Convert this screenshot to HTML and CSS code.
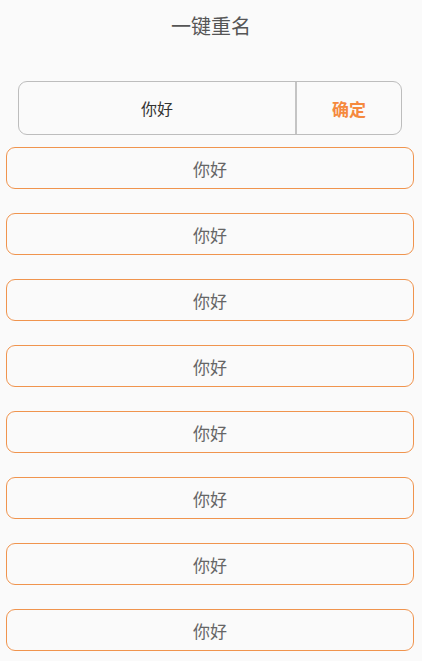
FILE: index.html
```html
<!DOCTYPE html>
<html lang="zh">
<head>
<meta charset="utf-8">
<title>一键重名</title>
<link rel="stylesheet" href="styles.css">
</head>
<body>
<div class="page">
  <header class="title">一键重名</header>
  <div class="rename">
    <div class="rename-input">你好</div>
    <div class="rename-ok">确定</div>
  </div>
  <ul class="list">
    <li class="item">你好</li>
    <li class="item">你好</li>
    <li class="item">你好</li>
    <li class="item">你好</li>
    <li class="item">你好</li>
    <li class="item">你好</li>
    <li class="item">你好</li>
    <li class="item">你好</li>
  </ul>
</div>
</body>
</html>
```
FILE: styles.css
```css
html, body {
  margin: 0;
  padding: 0;
  background: #fafafa;
}
body {
  font-family: Roboto, "Noto Sans CJK SC", sans-serif;
}
.page {
  display: flex;
  flex-direction: column;
  padding: 0 8px 0 6px;
}
.title {
  height: 50px;
  display: flex;
  align-items: center;
  justify-content: center;
  font-size: 20px;
  color: #555;
  padding-left: 2px;
}
.rename {
  margin: 31px 12px 12px 12px;
  height: 52px;
  border: 1px solid #bdbdbd;
  border-radius: 9px;
  display: flex;
}
.rename-input {
  width: 276px;
  border-right: 2px solid #c4c4c4;
  display: flex;
  align-items: center;
  justify-content: center;
  font-size: 16px;
  color: #333;
}
.rename-ok {
  flex: 1;
  display: flex;
  align-items: center;
  justify-content: center;
  font-size: 17px;
  font-weight: bold;
  color: #f5893e;
}
.list {
  list-style: none;
  margin: 0;
  padding: 0;
  display: flex;
  flex-direction: column;
  gap: 24px;
}
.item {
  height: 40px;
  border: 1px solid #f0944e;
  border-radius: 9px;
  display: flex;
  align-items: center;
  justify-content: center;
  font-size: 17px;
  color: #666;
}
```
